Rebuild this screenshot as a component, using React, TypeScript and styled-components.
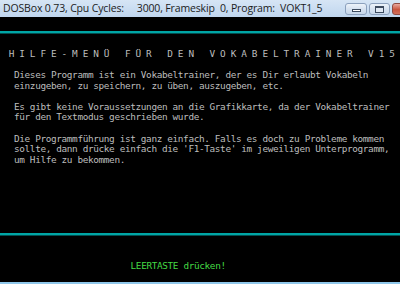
import React from 'react'
import styled, { createGlobalStyle } from 'styled-components'

const CELL_W = 5.3
const CELL_H = 10.6
const FONT = 9.4

const GlobalStyle = createGlobalStyle`
  html, body {
    margin: 0;
    padding: 0;
    background: #000;
    overflow: hidden;
  }
`

const Viewport = styled.div`
  width: 400px;
  height: 284px;
  overflow: hidden;
  background: #000;
`

const Window = styled.div`
  width: 436px;
  display: flex;
  flex-direction: column;
`

const TitleBar = styled.div`
  height: 17px;
  display: flex;
  align-items: flex-start;
  justify-content: space-between;
  background: linear-gradient(#d6e5f5, #c0d6ee);
`

const Caption = styled.div`
  padding: 2px 0 0 3px;
  font-family: 'Open Sans', 'Liberation Sans', sans-serif;
  font-size: 10.5px;
  line-height: 13px;
  color: #1b1b1b;
  white-space: pre;
  letter-spacing: -0.15px;
`

const Buttons = styled.div`
  display: flex;
  gap: 2px;
  padding-top: 3px;
  padding-right: 1px;
`

const CaptionButton = styled.div<{ $w: number; $close?: boolean }>`
  width: ${({ $w }) => $w}px;
  height: 12px;
  box-sizing: border-box;
  display: flex;
  align-items: center;
  justify-content: center;
  border: 1px solid ${({ $close }) => ($close ? '#8f4a42' : '#8ba0bc')};
  border-radius: 3px;
  background: ${({ $close }) =>
    $close
      ? 'linear-gradient(#e9a99f, #c9553f 55%, #d2705b)'
      : 'linear-gradient(#edf3fa, #d6e2f0 50%, #c7d7ea)'};
`

const MinGlyph = styled.div`
  width: 9px;
  height: 3px;
  margin-top: 3px;
  box-sizing: border-box;
  border: 1px solid #3c4a5e;
  background: #fff;
`

const MaxGlyph = styled.div`
  width: 9px;
  height: 7px;
  box-sizing: border-box;
  border: 1px solid #3c4a5e;
  border-top-width: 2px;
  background: #dfe8f3;
`

const Screen = styled.div`
  height: ${CELL_H * 25}px;
  display: flex;
  flex-direction: column;
  padding-left: 3.4px;
  background: #000;
  font-family: 'DejaVu Sans Mono', 'Liberation Mono', monospace;
  font-size: ${FONT}px;
`

const Row = styled.div<{ $col?: number; $color?: string }>`
  height: ${CELL_H}px;
  line-height: ${CELL_H}px;
  padding-left: ${({ $col = 0 }) => $col * CELL_W}px;
  color: ${({ $color }) => $color ?? '#bdbdbd'};
  white-space: pre;
  letter-spacing: ${CELL_W - FONT * 0.602}px;
`

const RuleRow = styled.div`
  height: ${CELL_H}px;
  display: flex;
  align-items: center;
  margin-left: -3.4px;
`

const Rule = styled.div`
  width: 100%;
  height: 3px;
  background: linear-gradient(#00a5a5 0 66%, #004f4f 66%);
`

const BottomBorder = styled.div`
  height: 2px;
  background: #8fc7ea;
`

const heading =
  'H I L F E - M E N Ü   F Ü R   D E N   V O K A B E L T R A I N E R   V 1 5'

type Line =
  | { kind: 'text'; text: string; col: number; color?: string }
  | { kind: 'rule' }
  | { kind: 'blank' }

const blank: Line = { kind: 'blank' }
const txt = (text: string, col = 2, color?: string): Line => ({ kind: 'text', text, col, color })

const lines: Line[] = [
  blank,
  { kind: 'rule' },
  blank,
  txt(heading, 1),
  blank,
  txt('Dieses Programm ist ein Vokabeltrainer, der es Dir erlaubt Vokabeln'),
  txt('einzugeben, zu speichern, zu üben, auszugeben, etc.'),
  blank,
  txt('Es gibt keine Voraussetzungen an die Grafikkarte, da der Vokabeltrainer'),
  txt('für den Textmodus geschrieben wurde.'),
  blank,
  txt('Die Programmführung ist ganz einfach. Falls es doch zu Probleme kommen'),
  txt("sollte, dann drücke einfach die 'F1-Taste' im jeweiligen Unterprogramm,"),
  txt('um Hilfe zu bekommen.'),
  blank,
  blank,
  blank,
  blank,
  blank,
  blank,
  { kind: 'rule' },
  blank,
  blank,
  txt('LEERTASTE drücken!', 24, '#44d844'),
  blank,
]

export default function App() {
  return (
    <Viewport>
      <GlobalStyle />
      <Window>
        <TitleBar>
          <Caption>{'DOSBox 0.73, Cpu Cycles:     3000, Frameskip  0, Program:  VOKT1_5'}</Caption>
          <Buttons>
            <CaptionButton $w={22}>
              <MinGlyph />
            </CaptionButton>
            <CaptionButton $w={21}>
              <MaxGlyph />
            </CaptionButton>
            <CaptionButton $w={43} $close />
          </Buttons>
        </TitleBar>
        <Screen>
          {lines.map((line, i) => {
            if (line.kind === 'rule')
              return (
                <RuleRow key={i}>
                  <Rule />
                </RuleRow>
              )
            if (line.kind === 'blank') return <Row key={i}> </Row>
            return (
              <Row key={i} $col={line.col} $color={line.color}>
                {line.text}
              </Row>
            )
          })}
        </Screen>
        <BottomBorder />
      </Window>
    </Viewport>
  )
}
